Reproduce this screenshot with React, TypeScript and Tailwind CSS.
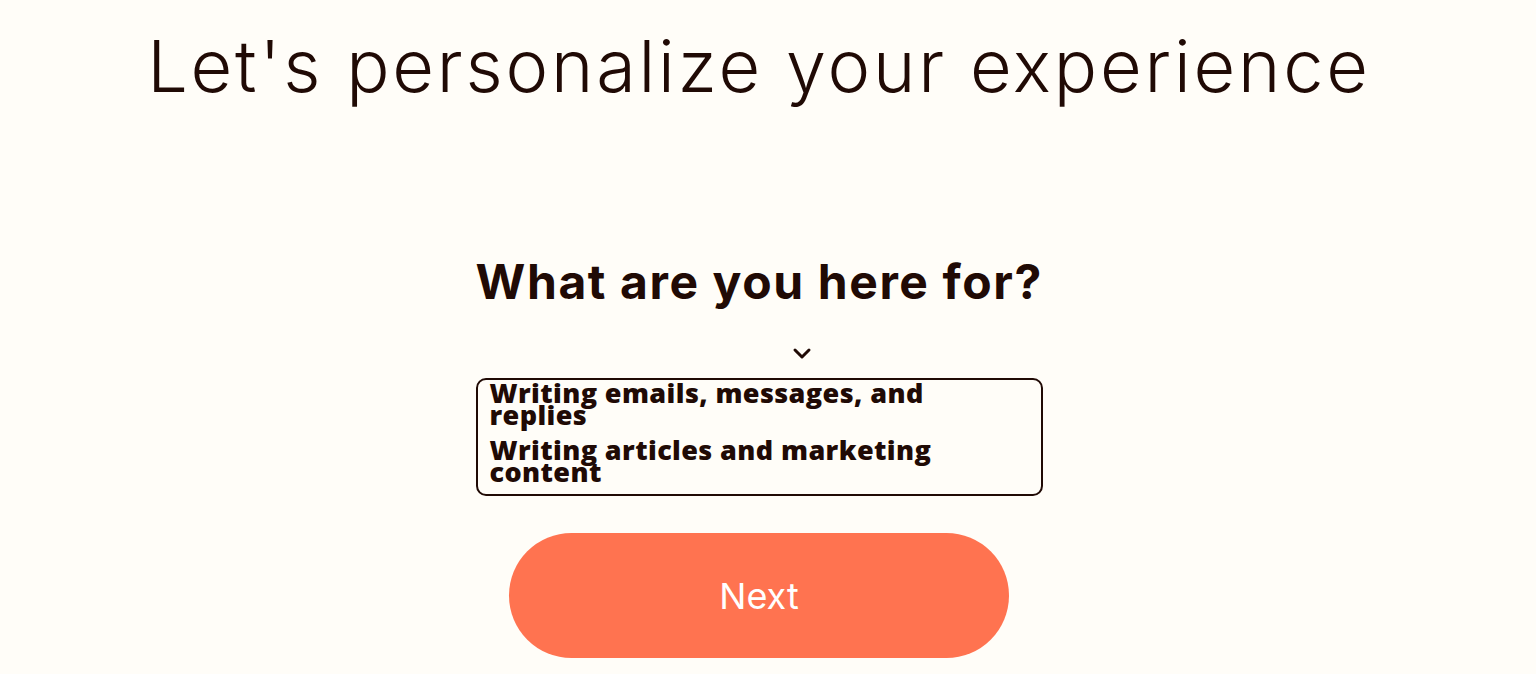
export default function App() {
  return (
    <div
      className="min-h-screen w-full bg-[#fffdf8] text-[#200a05] pr-[18px]"
      style={{ fontFamily: 'Inter, "Open Sans", sans-serif' }}
    >
      <div className="flex flex-col items-center">
        <h1 className="pt-[22px] text-[72px] leading-[88px] font-light tracking-[2.8px]">
          Let's personalize your experience
        </h1>

        <div className="mt-[144px] w-[567px] flex flex-col">
          <h2 className="text-center text-[48px] leading-[56px] font-bold tracking-[1.6px] whitespace-nowrap">
            What are you here for?
          </h2>

          <div className="mt-[33px] pl-[316px]">
            <svg
              className="h-5 w-5"
              viewBox="0 0 20 20"
              fill="none"
              stroke="currentColor"
              strokeWidth={3}
              strokeLinecap="round"
              strokeLinejoin="round"
            >
              <path d="M3 7l7 7 7-7" />
            </svg>
          </div>

          <div className="mt-[15px] h-[118px] rounded-[10px] border-2 border-[#200a05] px-3 pt-[2px]">
            <div
              className="w-[450px] flex flex-col gap-[13px] text-[27px] leading-[22px] font-extrabold tracking-[0.4px]"
              style={{ fontFamily: '"Open Sans", Lato, sans-serif' }}
            >
              <div>Writing emails, messages, and replies</div>
              <div>Writing articles and marketing content</div>
            </div>
          </div>

          <div className="mt-[37px] flex justify-center">
            <button className="h-[125px] w-[500px] rounded-full bg-[#ff7350] text-[36px] text-white">
              Next
            </button>
          </div>
        </div>
      </div>
    </div>
  );
}
